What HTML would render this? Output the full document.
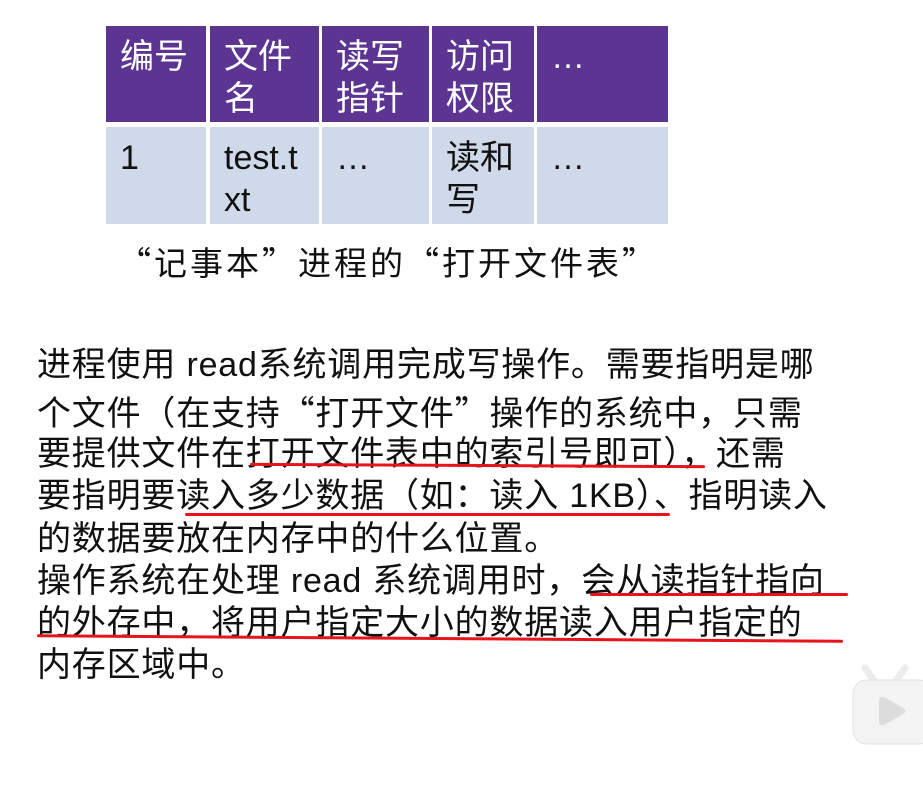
<!DOCTYPE html>
<html><head><meta charset="utf-8"><style>
body{margin:0;width:923px;height:803px;background:#fff;position:relative;overflow:hidden;font-family:"Liberation Sans","Noto Sans CJK SC",sans-serif;}
.q{font-family:"Noto Sans CJK SC",sans-serif;}
.c{position:absolute;box-sizing:border-box;padding:10px 0 0 14px;font-size:34px;line-height:42px;}
.h{background:#5c3592;color:#fff;top:26px;height:96px;}
.b{background:#cfd9e9;color:#111;top:127px;height:97px;}
.t{position:absolute;left:37px;font-size:34px;line-height:43px;color:#111;white-space:nowrap;letter-spacing:0.8px;}
.u{position:absolute;height:3px;background:#e8141c;border-radius:2px;}
</style></head><body>
<div class="c h" style="left:106px;width:100px">编号</div>
<div class="c h" style="left:210px;width:109px">文件<br>名</div>
<div class="c h" style="left:322px;width:107px">读写<br>指针</div>
<div class="c h" style="left:432px;width:102px">访问<br>权限</div>
<div class="c h" style="left:537px;width:131px">…</div>
<div class="c b" style="left:106px;width:100px">1</div>
<div class="c b" style="left:210px;width:109px">test.t<br>xt</div>
<div class="c b" style="left:322px;width:107px">…</div>
<div class="c b" style="left:432px;width:102px">读和<br>写</div>
<div class="c b" style="left:537px;width:131px">…</div>
<div class="q" style="position:absolute;left:118px;top:238px;font-size:33px;line-height:46px;color:#111;white-space:nowrap;letter-spacing:3px">“记事本”进程的“打开文件表”</div>
<div class="t" style="top:344px">进程使用 read系统调用完成写操作。需要指明是哪</div>
<div class="t" style="top:389px">个文件（在支持<span class="q">“</span>打开文件<span class="q">”</span>操作的系统中，只需</div>
<div class="t" style="top:433px">要提供文件在打开文件表中的索引号即可），还需</div>
<div class="t" style="top:475px">要指明要读入多少数据（如：读入 1KB）、指明读入</div>
<div class="t" style="top:518px">的数据要放在内存中的什么位置。</div>
<div class="t" style="top:560px">操作系统在处理 read 系统调用时，会从读指针指向</div>
<div class="t" style="top:602px">的外存中，将用户指定大小的数据读入用户指定的</div>
<div class="t" style="top:644px">内存区域中。</div>
<div class="u" style="left:250px;top:464px;width:455px;transform:rotate(0.3deg)"></div>
<div class="u" style="left:185px;top:513px;width:485px"></div>
<div class="u" style="left:590px;top:593px;width:258px"></div>
<div class="u" style="left:37px;top:637px;width:806px;transform:rotate(0.4deg)"></div>
<svg style="position:absolute;left:845px;top:660px" width="78" height="90" viewBox="0 0 78 90">
<path d="M30 22 L20 8 M50 22 L60 8" stroke="#ececec" stroke-width="7" stroke-linecap="round"/>
<rect x="8" y="20" width="80" height="64" rx="14" fill="#f4f4f4" stroke="#e2e2e2"/>
<path d="M34 42 Q34 34 41 38 L58 48 Q63 51 58 54 L41 64 Q34 68 34 60 Z" fill="#dcdcdc"/>
</svg>
</body></html>
